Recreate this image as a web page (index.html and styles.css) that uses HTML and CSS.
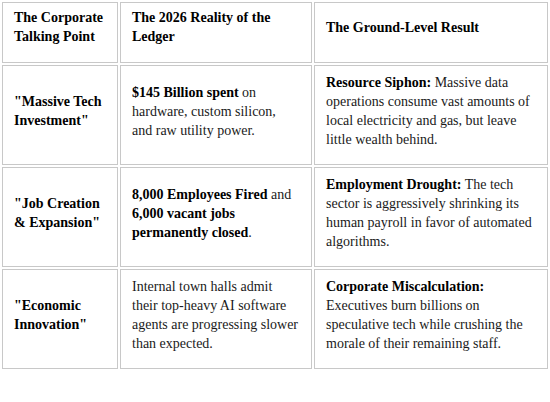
FILE: index.html
```html
<!DOCTYPE html>
<html lang="en">
<head>
    <meta charset="UTF-8">
    <meta name="viewport" content="width=device-width, initial-scale=1.0">
    <title>Corporate Talking Points vs. Reality</title>
    <link rel="stylesheet" href="styles.css">
</head>
<body>
    <table class="ledger-table">
        <colgroup>
            <col class="col-point">
            <col class="col-reality">
            <col class="col-result">
        </colgroup>
        <thead>
            <tr>
                <th>The Corporate Talking Point</th>
                <th>The 2026 Reality of the Ledger</th>
                <th>The Ground-Level Result</th>
            </tr>
        </thead>
        <tbody>
            <tr>
                <th scope="row">"Massive Tech Investment"</th>
                <td><strong>$145 Billion spent</strong> on hardware, custom silicon, <span class="nowrap">and raw utility power.</span></td>
                <td><strong>Resource Siphon:</strong> Massive data operations consume vast amounts of local electricity and gas, but leave little wealth behind.</td>
            </tr>
            <tr>
                <th scope="row">"Job Creation &amp; Expansion"</th>
                <td><strong>8,000 Employees Fired</strong> and <strong>6,000 vacant jobs permanently closed</strong>.</td>
                <td><strong>Employment Drought:</strong> The tech sector is aggressively shrinking its human payroll in favor of automated algorithms.</td>
            </tr>
            <tr>
                <th scope="row">"Economic Innovation"</th>
                <td>Internal town halls admit their top-heavy AI software agents are progressing slower than expected.</td>
                <td><strong>Corporate Miscalculation:</strong> Executives burn billions on speculative tech while crushing the morale of their remaining staff.</td>
            </tr>
        </tbody>
    </table>
</body>
</html>
```

FILE: styles.css
```css
* {
    margin: 0;
    padding: 0;
    box-sizing: border-box;
}

body {
    background-color: #fff;
    font-family: 'Liberation Serif', 'Times New Roman', serif;
    font-size: 14px;
    line-height: 19px;
    color: #1a1a1a;
}

.ledger-table {
    width: 550px;
    table-layout: fixed;
    border-collapse: separate;
    border-spacing: 2px;
}

.col-point {
    width: 116px;
}

.col-reality {
    width: 192px;
}

.col-result {
    width: 234px;
}

.ledger-table th,
.ledger-table td {
    border: 1px solid #c8c8c8;
    padding: 7px 10px 15px 11px;
    text-align: left;
    vertical-align: middle;
}

.ledger-table thead th {
    padding-top: 5px;
    padding-bottom: 16px;
    color: #000;
}

.ledger-table th {
    font-weight: bold;
    color: #000;
}

.ledger-table strong {
    color: #000;
}

.nowrap {
    white-space: nowrap;
}
```
